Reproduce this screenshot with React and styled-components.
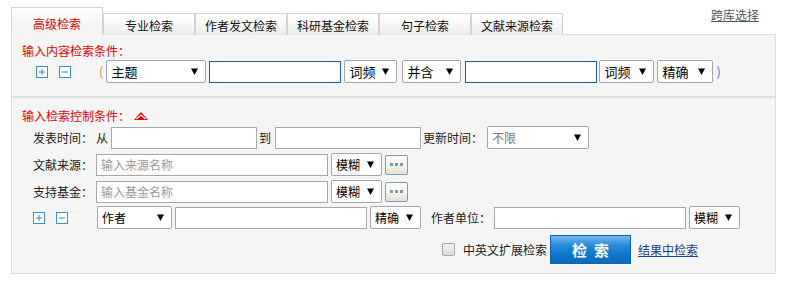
import React from "react"
import styled, { createGlobalStyle } from "styled-components"

const GlobalStyle = createGlobalStyle`
  body {
    margin: 0;
    background: #fff;
    font-family: "Noto Sans CJK SC", "Liberation Sans", sans-serif;
    font-size: 12px;
    color: #222;
  }
  * { box-sizing: border-box; }
`

const Page = styled.div`
  width: 776px;
  padding: 7px 0 0 11px;
`
const TabBar = styled.div`
  display: flex;
  align-items: flex-end;
  height: 28px;
  margin-bottom: -1px;
  position: relative;
  z-index: 1;
`
const Tab = styled.div`
  width: 92px;
  height: ${p => (p.$active ? "28px" : "22px")};
  border: 1px solid #d4d4d4;
  border-bottom: none;
  background: ${p =>
    p.$active
      ? "linear-gradient(#ffffff, #f5f5f5 60%)"
      : "linear-gradient(#ffffff, #f7f7f7 55%, #ebebeb)"};
  color: ${p => (p.$active ? "#e60000" : "#111")};
  font-size: 12px;
  line-height: ${p => (p.$active ? "27px" : "21px")};
  text-align: center;
  padding-top: ${p => (p.$active ? "2px" : "1px")};
`
const CrossLink = styled.a`
  align-self: flex-start;
  margin: 0 17px 0 auto;
  color: #555;
  text-decoration: underline;
  line-height: 16px;
  font-size: 12px;
`
const Panel = styled.div`
  border: 1px solid #dcdcdc;
  background: #f5f5f5;
`
const Section = styled.div`
  padding: ${p => p.$pad};
  border-bottom: ${p => (p.$divider ? "2px solid #e0e0e0" : "none")};
`
const Title = styled.div`
  display: flex;
  align-items: center;
  color: #e60000;
  font-size: 12px;
  line-height: 16px;
  padding-left: 10px;
`
const Row = styled.div`
  display: flex;
  align-items: center;
  height: ${p => p.$h || 23}px;
  margin-top: ${p => p.$mt || 0}px;
  padding-left: ${p => p.$pl || 21}px;
`
const Label = styled.span`
  width: ${p => (p.$w ? `${p.$w}px` : "auto")};
  margin-left: ${p => p.$ml || 0}px;
  flex-shrink: 0;
  color: #222;
  font-size: 12px;
  line-height: 16px;
  white-space: nowrap;
`
const Paren = styled.span`
  margin-left: ${p => p.$ml || 0}px;
  color: ${p => p.$color};
  font-size: 13px;
  line-height: 16px;
`
const Input = styled.input`
  width: ${p => p.$w}px;
  height: 22px;
  margin: 0 0 0 ${p => p.$ml || 0}px;
  border: 1px solid ${p => (p.$focus ? "#1c5eaa" : "#a8a8a8")};
  border-radius: 0;
  background: #fff;
  padding: 0 4px;
  font-family: inherit;
  font-size: 12px;
  color: #222;
  outline: none;
  &::placeholder { color: #9a9a9a; }
`
const SelectBox = styled.div`
  width: ${p => p.$w}px;
  height: 23px;
  margin-left: ${p => p.$ml || 0}px;
  flex-shrink: 0;
  display: flex;
  align-items: center;
  justify-content: space-between;
  padding: 0 7px 0 4px;
  border: 1px solid #a6a6a6;
  border-radius: 2px;
  background: #fff;
  font-size: ${p => p.$fs || 12}px;
  color: ${p => (p.$muted ? "#777" : "#000")};
  line-height: 16px;
  white-space: nowrap;
`
const MoreButton = styled.div`
  width: 23px;
  height: 20px;
  margin-left: ${p => p.$ml || 0}px;
  display: flex;
  align-items: center;
  justify-content: center;
  gap: 2px;
  border: 1px solid #7f9db9;
  border-radius: 2px;
  background: linear-gradient(#fefefe, #f3f1e8 60%, #e4e1d2);
  span {
    width: 3px;
    height: 3px;
    background: #7b9ab8;
  }
`
const IconBox = styled.span`
  display: inline-flex;
  margin-left: ${p => p.$ml || 0}px;
  flex-shrink: 0;
`
const CheckBox = styled.span`
  width: 13px;
  height: 13px;
  margin-left: ${p => p.$ml || 0}px;
  border: 1px solid #a9a9a9;
  border-radius: 2px;
  background: linear-gradient(#f2f2f2, #dcdcdc);
`
const SearchButton = styled.button`
  width: 81px;
  height: 29px;
  margin-left: ${p => p.$ml || 0}px;
  border: 1px solid #1063b0;
  background: linear-gradient(#6fb7ee 0%, #2a8ad9 35%, #127acd 60%, #0c6abb 100%);
  color: #fff;
  font-family: inherit;
  font-size: 15px;
  font-weight: bold;
  letter-spacing: 7px;
  padding: 0 0 0 7px;
  cursor: pointer;
`
const InnerLink = styled.a`
  margin-left: ${p => p.$ml || 0}px;
  color: #1a3f8f;
  text-decoration: underline;
  font-size: 12px;
  line-height: 16px;
`

const Arrow = () => (
  <svg width="7" height="7" viewBox="0 0 7 7">
    <polygon points="0,0.5 7,0.5 3.5,7" fill="#000" />
  </svg>
)

const Select = ({ text, w, ml, fs, muted }) => (
  <SelectBox $w={w} $ml={ml} $fs={fs} $muted={muted}>
    <span>{text}</span>
    <Arrow />
  </SelectBox>
)

const PlusIcon = ({ ml }) => (
  <IconBox $ml={ml}>
    <svg width="12" height="12" viewBox="0 0 12 12">
      <rect x="0.5" y="0.5" width="11" height="11" fill="#fff" stroke="#3a8fd0" />
      <path d="M3 6h6M6 3v6" stroke="#2f86c9" strokeWidth="1" />
    </svg>
  </IconBox>
)

const MinusIcon = ({ ml }) => (
  <IconBox $ml={ml}>
    <svg width="12" height="12" viewBox="0 0 12 12">
      <rect x="0.5" y="0.5" width="11" height="11" fill="#fff" stroke="#3a8fd0" />
      <path d="M3 6h6" stroke="#2f86c9" strokeWidth="1" />
    </svg>
  </IconBox>
)

const CollapseIcon = () => (
  <IconBox $ml={4}>
    <svg width="14" height="8" viewBox="0 0 14 8">
      <polygon points="0,8 7,0 14,8" fill="#e60000" />
      <polyline points="2.5,7 7,3 11.5,7" fill="none" stroke="#fff" strokeWidth="1.2" />
    </svg>
  </IconBox>
)

const tabs = ["高级检索", "专业检索", "作者发文检索", "科研基金检索", "句子检索", "文献来源检索"]

export default function App() {
  return (
    <>
      <GlobalStyle />
      <Page>
        <TabBar>
          {tabs.map((t, i) => (
            <Tab key={t} $active={i === 0}>{t}</Tab>
          ))}
          <CrossLink>跨库选择</CrossLink>
        </TabBar>
        <Panel>
          <Section $pad="8px 0 13px 0" $divider>
            <Title>输入内容检索条件：</Title>
            <Row $mt={1} $pl={24}>
              <PlusIcon />
              <MinusIcon ml={11} />
              <Paren $ml={28} $color="#d39a3c">(</Paren>
              <Select text="主题" w={100} ml={3} fs={13} />
              <Input $w={132} $ml={3} $focus />
              <Select text="词频" w={53} ml={3} fs={13} />
              <Select text="并含" w={59} ml={5} fs={13} />
              <Input $w={132} $ml={4} $focus />
              <Select text="词频" w={55} ml={2} fs={13} />
              <Select text="精确" w={56} ml={3} fs={13} />
              <Paren $ml={3} $color="#4a7fd0">)</Paren>
            </Row>
          </Section>
          <Section $pad="10px 0 9px 0">
            <Title>
              输入检索控制条件：
              <CollapseIcon />
            </Title>
            <Row $mt={2}>
              <Label $w={63}>发表时间：</Label>
              <Label>从</Label>
              <Input $w={146} $ml={3} />
              <Label $ml={2}>到</Label>
              <Input $w={146} $ml={4} />
              <Label $ml={2}>更新时间：</Label>
              <Select text="不限" w={102} ml={4} muted />
            </Row>
            <Row $mt={4}>
              <Label $w={63}>文献来源：</Label>
              <Input $w={232} placeholder="输入来源名称" />
              <Select text="模糊" w={51} ml={3} />
              <MoreButton $ml={3}><span /><span /><span /></MoreButton>
            </Row>
            <Row $mt={4}>
              <Label $w={63}>支持基金：</Label>
              <Input $w={232} placeholder="输入基金名称" />
              <Select text="模糊" w={51} ml={3} />
              <MoreButton $ml={3}><span /><span /><span /></MoreButton>
            </Row>
            <Row $mt={3}>
              <PlusIcon />
              <MinusIcon ml={11} />
              <Select text="作者" w={75} ml={29} />
              <Input $w={192} $ml={3} />
              <Select text="精确" w={51} ml={3} />
              <Label $ml={10}>作者单位：</Label>
              <Input $w={192} $ml={3} />
              <Select text="模糊" w={51} ml={3} />
            </Row>
            <Row $mt={6} $h={29}>
              <CheckBox $ml={409} />
              <Label $ml={8}>中英文扩展检索</Label>
              <SearchButton $ml={3}>检索</SearchButton>
              <InnerLink $ml={7}>结果中检索</InnerLink>
            </Row>
          </Section>
        </Panel>
      </Page>
    </>
  )
}
